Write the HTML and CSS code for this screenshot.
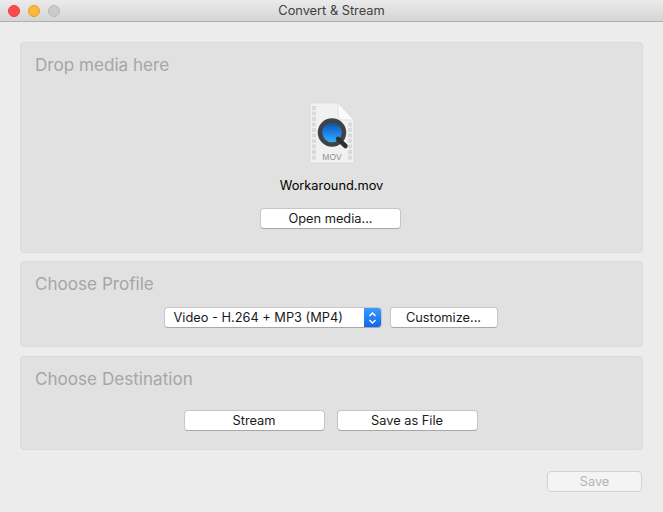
FILE: index.html
```html
<!DOCTYPE html>
<html lang="en">
<head>
<meta charset="utf-8">
<title>Convert &amp; Stream</title>
<link rel="stylesheet" href="styles.css">
</head>
<body>
<div class="window">
  <header class="titlebar">
    <div class="lights">
      <span class="light red"></span>
      <span class="light yellow"></span>
      <span class="light grey"></span>
    </div>
    <div class="title">Convert &amp; Stream</div>
  </header>
  <main class="content">
    <section class="panel panel-media">
      <h2 class="panel-title">Drop media here</h2>
      <div class="media-body">
        <svg class="file-icon" width="52" height="66" viewBox="0 0 52 66">
          <defs>
            <linearGradient id="lens" x1="0" y1="0" x2="0" y2="1">
              <stop offset="0" stop-color="#14478f"/>
              <stop offset="0.5" stop-color="#1c7fe6"/>
              <stop offset="1" stop-color="#38bcfc"/>
            </linearGradient>
          </defs>
          <path d="M4 1H32L48 18V61H4Z" fill="#f1f1f1" stroke="#dcdcdc" stroke-width="1"/>
          <path d="M32 1L48 18H38Q32 18 32 12Z" fill="#fbfbfb" stroke="#dcdcdc" stroke-width="0.8"/>
          <g class="holes">
            <rect x="6" y="4" width="4" height="4"/><rect x="6" y="9.500" width="4" height="4"/>
            <rect x="6" y="15" width="4" height="4"/><rect x="6" y="20.500" width="4" height="4"/>
            <rect x="6" y="26" width="4" height="4"/><rect x="6" y="31.500" width="4" height="4"/>
            <rect x="6" y="37" width="4" height="4"/><rect x="6" y="42.500" width="4" height="4"/>
            <rect x="6" y="48" width="4" height="4"/><rect x="6" y="53.500" width="4" height="4"/>
            <rect x="42" y="20.500" width="4" height="4"/><rect x="42" y="26" width="4" height="4"/>
            <rect x="42" y="31.500" width="4" height="4"/><rect x="42" y="37" width="4" height="4"/>
            <rect x="42" y="42.500" width="4" height="4"/><rect x="42" y="48" width="4" height="4"/>
            <rect x="42" y="53.500" width="4" height="4"/>
          </g>
          <circle cx="26" cy="30.500" r="12" fill="url(#lens)" stroke="#3f4347" stroke-width="4.500"/>
          <path d="M32 37L39.500 44" stroke="#2c3034" stroke-width="4.500" stroke-linecap="round"/>
          <text x="26" y="57.500" class="mov">MOV</text>
        </svg>
        <div class="filename">Workaround.mov</div>
        <button class="btn btn-open" type="button">Open media...</button>
      </div>
    </section>
    <section class="panel panel-profile">
      <h2 class="panel-title">Choose Profile</h2>
      <div class="row row-profile">
        <div class="select">
          <span class="select-label">Video - H.264 + MP3 (MP4)</span>
          <span class="select-arrow">
            <svg width="9" height="14" viewBox="0 0 9 14"><path d="M1.500 5L4.500 2L7.500 5M1.500 9L4.500 12L7.500 9" fill="none" stroke="#fff" stroke-width="1.400"/></svg>
          </span>
        </div>
        <button class="btn btn-custom" type="button">Customize...</button>
      </div>
    </section>
    <section class="panel panel-dest">
      <h2 class="panel-title">Choose Destination</h2>
      <div class="row row-dest">
        <button class="btn btn-dest" type="button">Stream</button>
        <button class="btn btn-dest" type="button">Save as File</button>
      </div>
    </section>
    <div class="footer">
      <button class="btn btn-save" type="button" disabled>Save</button>
    </div>
  </main>
</div>
</body>
</html>
```
FILE: styles.css
```css
* { box-sizing: border-box; }
html, body { margin: 0; height: 100%; }
body {
  background: #ececec;
  font-family: Inter, "Liberation Sans", sans-serif;
  font-size: 12.8px;
  color: #1a1a1a;
  overflow: hidden;
}
.window { width: 663px; height: 512px; display: flex; flex-direction: column; }
.titlebar {
  height: 22px;
  flex: none;
  display: flex;
  align-items: center;
  justify-content: center;
  position: relative;
  background: linear-gradient(#ebebeb, #d5d5d5);
  border-bottom: 1px solid #b0b0b0;
  border-radius: 5px 5px 0 0;
}
.lights { position: absolute; left: 8px; top: 5px; display: flex; gap: 8px; }
.light { width: 12px; height: 12px; border-radius: 50%; }
.red { background: #fc4a4c; border: 1px solid #e0443e; }
.yellow { background: #fdb73c; border: 1px solid #dea123; }
.grey { background: #cbcbcb; border: 1px solid #b9b9b9; }
.title { font-size: 12.8px; color: #3f3f3f; }
.content { flex: 1; display: flex; flex-direction: column; padding: 20px 20px 0; }
.panel {
  background: #e1e1e1;
  border: 1px solid #dadada;
  border-radius: 4px;
  padding: 11px 14px 0;
}
.panel-media { height: 211px; margin-bottom: 8px; }
.panel-profile { height: 86px; margin-bottom: 9px; }
.panel-dest { height: 94px; }
.panel-title { margin: 0; font-size: 17.1px; line-height: 22px; font-weight: 400; color: #a6a6a6; }
.media-body { display: flex; flex-direction: column; align-items: center; padding-top: 26px; }
.file-icon { display: block; }
.holes rect { fill: #dadada; }
.mov { font-size: 8.5px; fill: #8e8e8e; text-anchor: middle; font-family: "Liberation Sans", sans-serif; }
.filename { margin-top: 9px; line-height: 18px; color: #000; }
.btn {
  height: 21px;
  padding: 0;
  background: #fff;
  border: 1px solid #c6c6c6;
  border-bottom-color: #a8a8a8;
  border-radius: 4px;
  font: inherit;
  color: #1a1a1a;
  line-height: 19px;
}
.btn-open { width: 141px; margin-top: 13px; margin-right: 2px; }
.row { display: flex; justify-content: center; padding-right: 2px; }
.row-profile { gap: 8px; margin-top: 12px; }
.select {
  width: 218px;
  height: 21px;
  display: flex;
  background: #fff;
  border: 1px solid #c6c6c6;
  border-bottom-color: #a8a8a8;
  border-radius: 4px;
  overflow: hidden;
}
.select-label { flex: 1; padding-left: 9px; line-height: 19px; }
.select-arrow {
  width: 17px;
  display: flex;
  align-items: center;
  justify-content: center;
  background: linear-gradient(#3d9bfb, #0f66ed);
}
.btn-custom { width: 108px; }
.row-dest { gap: 12px; margin-top: 20px; }
.btn-dest { width: 141px; }
.footer { display: flex; justify-content: flex-end; margin-top: 21px; padding-right: 1px; }
.btn-save {
  width: 95px;
  background: #f4f4f4;
  border-color: #d2d2d2;
  color: #b4b4b4;
}
```
